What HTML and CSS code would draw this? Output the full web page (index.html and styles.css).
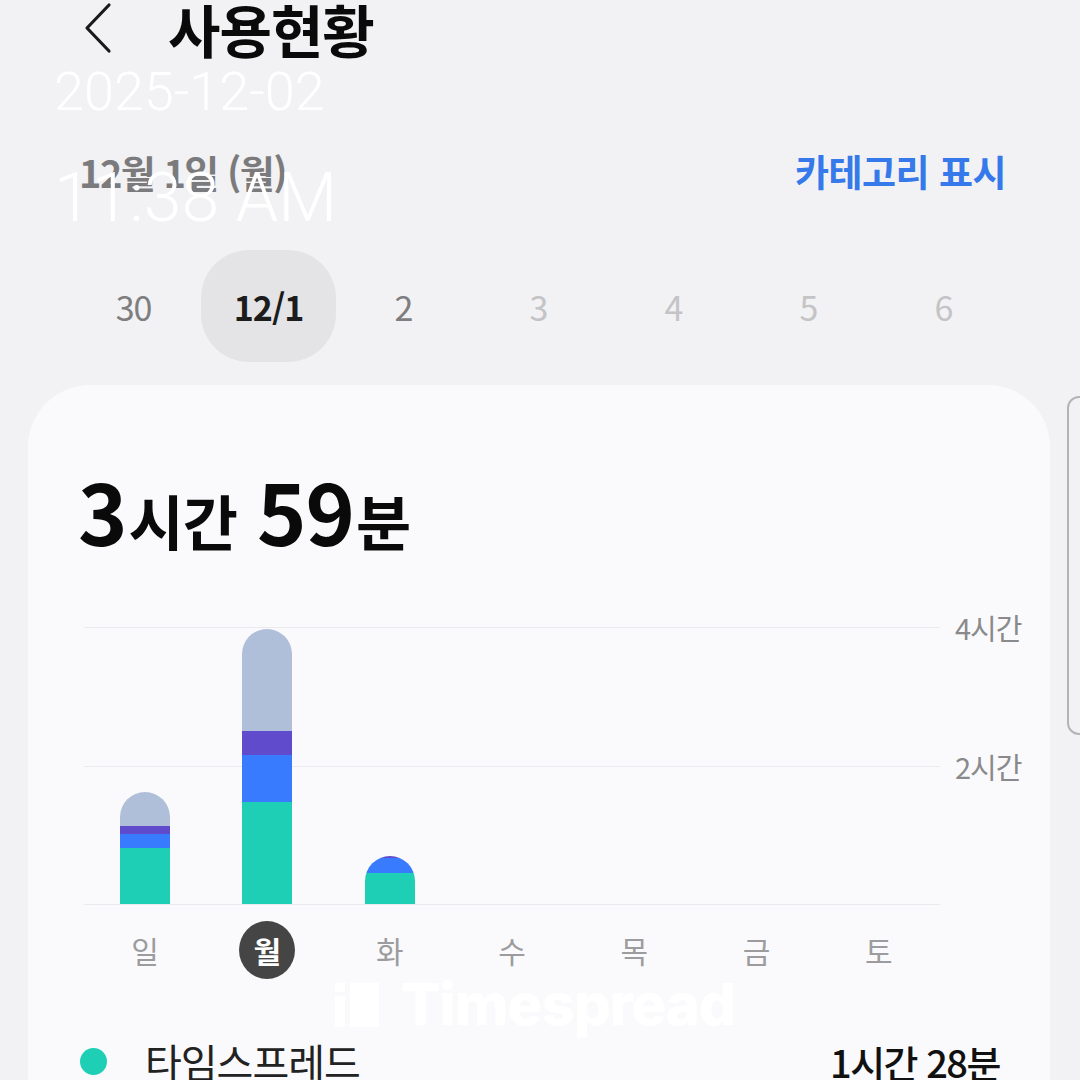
FILE: index.html
```html
<!DOCTYPE html>
<html lang="ko">
<head>
<meta charset="utf-8">
<title>사용현황</title>
<link rel="stylesheet" href="styles.css">
</head>
<body>
<div class="page">
  <header class="header">
    <svg class="back" width="40" height="56" viewBox="0 0 40 56" aria-hidden="true">
      <polyline points="29,5 7,28 29,51" fill="none" stroke="#1a1a1a" stroke-width="3.2" stroke-linecap="round" stroke-linejoin="round"/>
    </svg>
    <h1 class="title">사용현황</h1>
  </header>

  <div class="stamp">
    <div class="stamp-date">2025-12-02</div>
    <div class="stamp-time">11:38 AM</div>
  </div>

  <div class="subhead">
    <span class="cur-date">12월 1일 (월)</span>
    <span class="cat-link">카테고리 표시</span>
  </div>

  <div class="dates">
    <div class="d d-mid">30</div>
    <div class="d d-sel">12/1</div>
    <div class="d d-mid">2</div>
    <div class="d d-off">3</div>
    <div class="d d-off">4</div>
    <div class="d d-off">5</div>
    <div class="d d-off">6</div>
  </div>

  <section class="card">
    <div class="total"><span class="num">3</span><span class="unit">시간</span><span class="num gap">59</span><span class="unit">분</span></div>

    <div class="chart">
      <div class="grow"><div class="gline"></div><span class="ylabel">4시간</span></div>
      <div class="grow"><div class="gline"></div><span class="ylabel">2시간</span></div>
      <div class="grow last"><div class="gline"></div></div>

      <div class="bars">
        <div class="col">
          <div class="bar">
            <div class="seg s-gray" style="height:34px"></div>
            <div class="seg s-purple" style="height:8px"></div>
            <div class="seg s-blue" style="height:14px"></div>
            <div class="seg s-green" style="height:56px"></div>
          </div>
        </div>
        <div class="col">
          <div class="bar">
            <div class="seg s-gray" style="height:102px"></div>
            <div class="seg s-purple" style="height:24px"></div>
            <div class="seg s-blue" style="height:47px"></div>
            <div class="seg s-green" style="height:102px"></div>
          </div>
        </div>
        <div class="col">
          <div class="bar">
            <div class="seg s-purple" style="height:2px"></div>
            <div class="seg s-blue" style="height:15px"></div>
            <div class="seg s-green" style="height:31px"></div>
          </div>
        </div>
        <div class="col"></div>
        <div class="col"></div>
        <div class="col"></div>
        <div class="col"></div>
      </div>
    </div>

    <div class="days">
      <div class="day">일</div>
      <div class="day"><span class="day-sel">월</span></div>
      <div class="day">화</div>
      <div class="day">수</div>
      <div class="day">목</div>
      <div class="day">금</div>
      <div class="day">토</div>
    </div>

    <div class="watermark">
      <svg width="46" height="46" viewBox="0 0 46 46" aria-hidden="true">
        <rect x="0" y="2" width="10" height="9" fill="#ffffff"/>
        <rect x="0" y="15" width="10" height="31" fill="#ffffff"/>
        <rect x="15" y="2" width="29" height="44" fill="#ffffff"/>
      </svg>
      <span class="wm-text">Timespread</span>
    </div>

    <div class="legend">
      <span class="dot"></span>
      <span class="app">타임스프레드</span>
      <span class="dur">1시간 28분</span>
    </div>
  </section>

  <div class="scroll-thumb"></div>
</div>
</body>
</html>
```

FILE: styles.css
```css
* { box-sizing: border-box; }
html, body {
  margin: 0;
  padding: 0;
  background: #f2f2f4;
}
body {
  font-family: "Noto Sans CJK KR", "Noto Sans", sans-serif;
  color: #111;
  width: 1080px;
  height: 1080px;
  overflow: hidden;
}
.page {
  position: relative;
  width: 1080px;
  height: 1080px;
  overflow: hidden;
}

/* header */
.header {
  display: flex;
  align-items: center;
  height: 56px;
  padding-left: 80px;
}
.back { display: block; flex: none; }
.title {
  margin: 0 0 0 48px;
  font-size: 57px;
  font-weight: 700;
  line-height: 56px;
  letter-spacing: -1px;
  color: #0a0a0a;
}

/* screenshot timestamp overlay */
.stamp {
  position: absolute;
  left: 54px;
  top: 61px;
  color: #ffffff;
  font-family: Roboto, "Liberation Sans", sans-serif;
  font-weight: 300;
}
.stamp-date {
  font-size: 54px;
  line-height: 62px;
}
.stamp-time {
  margin-top: 38px;
  font-size: 68px;
  line-height: 74px;
}

/* sub header */
.subhead {
  display: flex;
  justify-content: space-between;
  align-items: center;
  height: 50px;
  margin-top: 90px;
  padding: 0 74px 0 79px;
}
.cur-date {
  font-size: 38px;
  font-weight: 700;
  color: #7b7b7d;
  letter-spacing: -1.5px;
}
.cat-link {
  font-size: 37px;
  font-weight: 700;
  color: #3679ea;
  letter-spacing: -0.5px;
}

/* date strip */
.dates {
  display: flex;
  margin-top: 54px;
  padding-left: 66px;
}
.d {
  width: 135px;
  height: 112px;
  display: flex;
  align-items: center;
  justify-content: center;
  font-size: 34px;
  letter-spacing: -1px;
}
.d-mid { color: #7e7e80; }
.d-off { color: #c4c4c6; }
.d-sel {
  background: #e4e4e6;
  border-radius: 48px;
  color: #1c1c1c;
  font-weight: 700;
}

/* card */
.card {
  margin: 23px 30px 0 28px;
  background: #fafafc;
  border-radius: 62px 62px 0 0;
  padding: 75px 0 0 0;
  height: 720px;
}
.total {
  padding-left: 50px;
  line-height: 100px;
  height: 100px;
  color: #0a0a0a;
  font-weight: 700;
}
.total .num {
  font-size: 84px;
  letter-spacing: -1px;
}
.total .num.gap { margin-left: 20px; }
.total .unit {
  font-size: 60px;
  letter-spacing: -1px;
  margin-left: 2px;
}

/* chart */
.chart {
  position: relative;
  margin: 67px 0 0 56px;
  width: 940px;
}
.grow {
  display: flex;
  height: 138.5px;
}
.grow.last { height: 2px; }
.gline {
  width: 856px;
  height: 0;
  border-top: 1.5px solid #ebebef;
}
.ylabel {
  margin: -16px 0 0 15px;
  font-size: 29px;
  line-height: 32px;
  height: 32px;
  color: #8a8a8c;
  letter-spacing: -1px;
}
.bars {
  position: absolute;
  left: 0;
  top: 0;
  width: 856px;
  height: 277px;
  display: flex;
  align-items: flex-end;
}
.col {
  flex: 1;
  display: flex;
  justify-content: center;
  align-items: flex-end;
  height: 100%;
}
.bar {
  width: 50px;
  display: flex;
  flex-direction: column;
  border-radius: 25px 25px 0 0;
  overflow: hidden;
}
.seg { width: 100%; flex: none; }
.s-gray { background: #b0bfd9; }
.s-purple { background: #5f4bcc; }
.s-blue { background: #387bff; }
.s-green { background: #1ecfb6; }

/* day labels */
.days {
  display: flex;
  margin: 15px 0 0 56px;
  width: 856px;
  height: 58px;
}
.day {
  flex: 1;
  display: flex;
  align-items: center;
  justify-content: center;
  font-size: 30px;
  color: #9c9c9e;
}
.day-sel {
  width: 56px;
  height: 58px;
  border-radius: 50%;
  background: #454545;
  color: #ffffff;
  font-weight: 700;
  display: flex;
  align-items: center;
  justify-content: center;
}

/* watermark */
.watermark {
  display: flex;
  align-items: center;
  justify-content: center;
  gap: 20px;
  height: 50px;
  margin-left: -8px;
}
.wm-text {
  font-family: Inter, "Liberation Sans", sans-serif;
  font-size: 58px;
  font-weight: 800;
  letter-spacing: -1px;
  color: #ffffff;
  line-height: 50px;
}

/* legend row */
.legend {
  display: flex;
  align-items: center;
  height: 46px;
  margin-top: 9px;
  padding: 0 50px 0 52px;
}
.dot {
  width: 27px;
  height: 27px;
  border-radius: 50%;
  background: #1ecfb6;
  flex: none;
}
.app {
  margin-left: 38px;
  font-size: 40px;
  color: #222;
  letter-spacing: -1px;
}
.dur {
  margin-left: auto;
  font-size: 38px;
  font-weight: 500;
  color: #111;
  letter-spacing: -1.5px;
}

/* side scroll indicator */
.scroll-thumb {
  position: absolute;
  left: 1067px;
  top: 396px;
  width: 30px;
  height: 339px;
  border: 2px solid #b4b4b6;
  border-radius: 12px;
}
```
